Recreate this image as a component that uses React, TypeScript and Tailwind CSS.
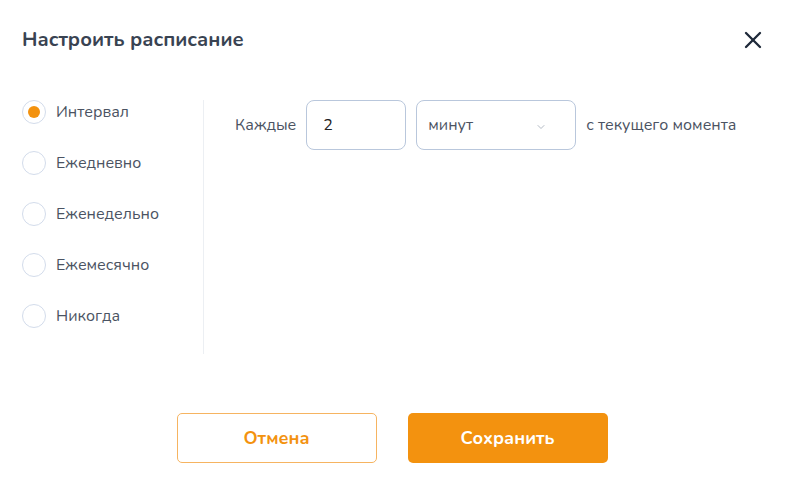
import { ChevronDown, X } from "lucide-react";

const options = ["Интервал", "Ежедневно", "Еженедельно", "Ежемесячно", "Никогда"];

function Radio({ label, checked }: { label: string; checked?: boolean }) {
  return (
    <label className="flex h-6 items-center gap-[10px]">
      <span className="flex h-6 w-6 items-center justify-center rounded-full border border-[#d3dceb] bg-white">
        {checked && <span className="h-3 w-3 rounded-full bg-[#f3920f]" />}
      </span>
      <span className="text-[16px] text-[#4b5362]">{label}</span>
    </label>
  );
}

export default function App() {
  return (
    <div className="flex h-[485px] w-[785px] flex-col bg-white font-['Nunito','Noto_Sans',sans-serif]">
      {/* Header */}
      <div className="flex h-[80px] items-center justify-between pl-[22px] pr-[18px]">
        <h2 className="text-[20px] font-bold text-[#394352]">Настроить расписание</h2>
        <button className="text-[#1f2a3a]">
          <X className="h-7 w-7" strokeWidth={2} />
        </button>
      </div>

      {/* Body */}
      <div className="mt-[20px] flex pl-[22px]">
        <div className="flex w-[182px] flex-col gap-[27px] border-r border-[#eceff3] pb-[26px]">
          {options.map((o, i) => (
            <Radio key={o} label={o} checked={i === 0} />
          ))}
        </div>

        <div className="flex items-center gap-[10px] self-start pl-[31px] text-[16px] text-[#4b5362]">
          <span>Каждые</span>
          <div className="flex h-[50px] w-[100px] items-center rounded-lg border border-[#b9c7dc] px-4 text-[#222]">
            2
          </div>
          <div className="flex h-[50px] w-[160px] items-center justify-between rounded-lg border border-[#b9c7dc] pl-[11px] pr-[28px]">
            <span>минут</span>
            <ChevronDown className="mt-1 h-3 w-3 text-[#9aa3b0]" strokeWidth={1.5} />
          </div>
          <span>с текущего момента</span>
        </div>
      </div>

      {/* Footer */}
      <div className="mt-[59px] flex justify-center gap-[31px] pr-px">
        <button className="h-[50px] w-[200px] rounded-[5px] border border-[#f6b461] bg-white text-[18px] font-bold text-[#f3920f]">
          Отмена
        </button>
        <button className="h-[50px] w-[200px] rounded-[5px] bg-[#f3920f] text-[18px] font-bold text-white">
          Сохранить
        </button>
      </div>
    </div>
  );
}
